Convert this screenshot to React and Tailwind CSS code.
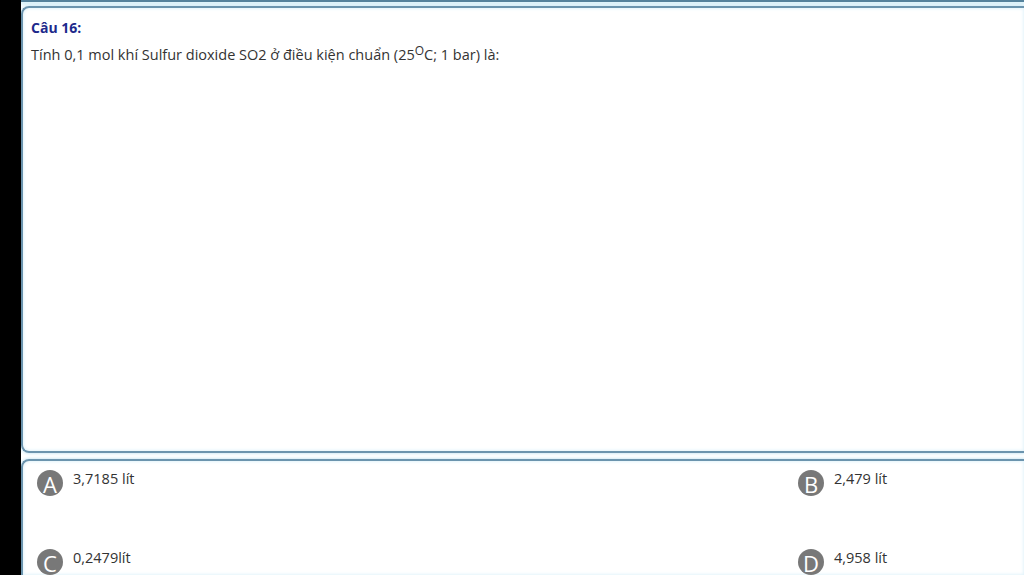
import React from 'react';

const options = [
  { key: 'A', text: '3,7185 lít' },
  { key: 'B', text: '2,479 lít' },
  { key: 'C', text: '0,2479lít' },
  { key: 'D', text: '4,958 lít' },
];

function Badge({ letter }) {
  return (
    <div className="w-[26px] h-[26px] shrink-0 rounded-full bg-[#787878] text-white flex items-center justify-center text-[22px] leading-none font-['Open_Sans',sans-serif]">
      <span className="mt-[2px]">{letter}</span>
    </div>
  );
}

export default function App() {
  return (
    <div className="w-[1024px] h-[575px] overflow-hidden flex bg-black font-['Open_Sans',sans-serif]">
      <div className="w-[21px] shrink-0" />
      <div className="flex-1 bg-white flex flex-col overflow-hidden">
        {/* bottom edge of the previous card */}
        <div className="h-[2px] bg-[#55829c] shadow-[0_2px_3px_1px_#d8f1f9]" />

        <div className="mt-[4px] h-[447px] shrink-0 border-2 border-r-0 border-[#6b94ae] rounded-l-[8px] shadow-[0_0_3px_1px_#cfeaf6,inset_0_0_3px_1px_#e3f4fb] px-[8px] pt-[11px]">
          <div className="text-[14px] font-bold text-[#1d2a8c] leading-[18px]">Câu 16:</div>
          <div className="mt-[9px] text-[14.5px] text-[#333] leading-[18px]">
            Tính 0,1 mol khí Sulfur dioxide SO2 ở điều kiện chuẩn (25<sup className="text-[12px] relative -top-[5px]">O</sup>C; 1 bar) là:
          </div>
        </div>

        <div className="mt-[6px] flex-1 border-2 border-r-0 border-b-0 border-[#6b94ae] rounded-tl-[8px] shadow-[0_0_3px_1px_#cfeaf6,inset_0_0_3px_1px_#e3f4fb] pl-[14px] pt-[9px]">
          <div className="grid grid-cols-[761px_1fr] gap-y-[53px]">
            {options.map((o) => (
              <div key={o.key} className="flex items-start gap-[10px]">
                <Badge letter={o.key} />
                <div className="text-[14.5px] text-[#333] leading-[16px] mt-[1px]">{o.text}</div>
              </div>
            ))}
          </div>
        </div>
      </div>
    </div>
  );
}
